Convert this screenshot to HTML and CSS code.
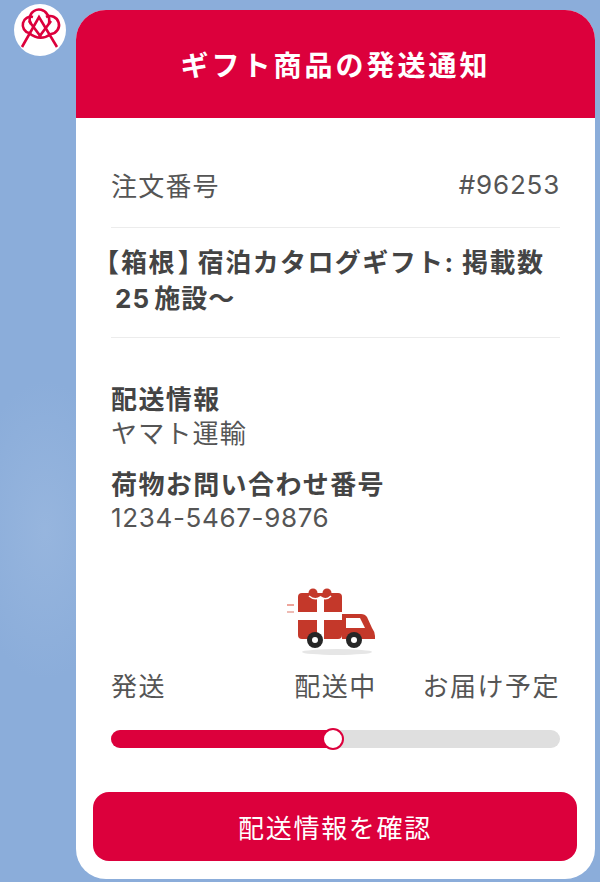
FILE: index.html
```html
<!DOCTYPE html>
<html lang="ja">
<head>
<meta charset="utf-8">
<title>ギフト商品の発送通知</title>
<link rel="stylesheet" href="styles.css">
</head>
<body>
<div class="chat">
  <div class="avatar">
    <svg viewBox="0 0 52 52" width="52" height="52" fill="none" stroke="#dc003c" stroke-width="2.600">
      <path d="M19 13 A8 8 0 1 0 15 29 Q26 38 37 30 A9 9 0 1 0 32 13"/>
      <path d="M17 20 A8 8 0 0 1 33 10 Q36 13 35 20"/>
      <path d="M8 43 L25 13 L43 43"/>
      <path d="M15 17 L27 33"/>
      <path d="M37 17 L25 33"/>
    </svg>
  </div>
  <main class="card">
    <header class="card-head">ギフト商品の発送通知</header>
    <div class="card-body">
      <div class="order-row"><span>注文番号</span><span class="order-no">#96253</span></div>
      <div class="product"><span class="bracket-open">【</span>箱根<span class="bracket-close">】</span>宿泊カタログギフト: 掲載数<br><span class="count">25 施設～</span></div>
      <section class="info">
        <h2 class="info-label">配送情報</h2>
        <p class="info-value">ヤマト運輸</p>
        <h2 class="info-label second">荷物お問い合わせ番号</h2>
        <p class="info-value num">1234-5467-9876</p>
      </section>
      <div class="truck-wrap">
        <svg class="truck" viewBox="0 0 92 70" width="92" height="70">
          <ellipse cx="52" cy="66" rx="35" ry="3" fill="#e6e6e6"/>
          <rect x="2" y="18" width="7" height="2" fill="#eea59b"/>
          <rect x="2" y="25" width="7" height="2" fill="#eebbb4"/>
          <path d="M57 28 H76 Q80 28 82 31 L87 42 Q90 46 90 50 V53 H57 Z" fill="#c4382a"/>
          <path d="M61 32 H75 L80 42 H61 Z" fill="#fff"/>
          <rect x="13" y="7" width="44" height="46" rx="4" fill="#c4382a"/>
          <rect x="13" y="26" width="44" height="8" fill="#fff"/>
          <rect x="32" y="12" width="7" height="41" fill="#fff"/>
          <circle cx="28" cy="7" r="4.500" fill="#c4382a"/>
          <circle cx="42" cy="7" r="4.500" fill="#c4382a"/>
          <path d="M24 10 Q30 15 35.500 11 Q41 15 46 10" fill="none" stroke="#fff" stroke-width="1.600"/>
          <circle cx="30" cy="54" r="8" fill="#262626"/>
          <circle cx="30" cy="54" r="3" fill="#fff"/>
          <circle cx="69" cy="54" r="8" fill="#262626"/>
          <circle cx="69" cy="54" r="3" fill="#fff"/>
        </svg>
      </div>
      <div class="steps"><span>発送</span><span class="mid">配送中</span><span class="end">お届け予定</span></div>
      <div class="track"><div class="fill"></div><div class="knob"></div></div>
      <a class="cta">配送情報を確認</a>
    </div>
  </main>
</div>
</body>
</html>
```
FILE: styles.css
```css
html, body { margin: 0; padding: 0; height: 100%; }
body {
  width: 600px; height: 882px; overflow: hidden;
  background:
    radial-gradient(ellipse 75px 150px at 45px 530px, rgba(160, 188, 225, 0.55), rgba(160, 188, 225, 0) 100%),
    #8badda;
  font-family: "Noto Sans CJK JP", "Noto Sans", sans-serif;
  color: #444;
}
.chat { display: flex; align-items: flex-start; padding: 4px 5px 0 14px; gap: 10px; }
.avatar {
  width: 52px; height: 52px; border-radius: 50%; background: #fff; flex: none;
  display: flex;
}
.card {
  margin-top: 6px; width: 519px; height: 869px; background: #fff;
  border-radius: 30px; overflow: hidden; display: flex; flex-direction: column;
}
.card-head {
  height: 108px; flex: none; background: #dc003c; color: #fff;
  display: flex; align-items: center; justify-content: center;
  font-size: 28px; font-weight: 700; letter-spacing: 3px;
}
.card-body { padding: 0 35px 18px; display: flex; flex-direction: column; flex: 1; }
.order-row {
  display: flex; justify-content: space-between; align-items: center;
  height: 110px; padding-top: 24px; border-bottom: 1px solid #ececec; box-sizing: border-box;
  font-size: 26px; letter-spacing: 1.2px; color: #555;
}
.order-no { font-family: "Inter", "Liberation Sans", sans-serif; letter-spacing: 0.8px; }
.product {
  height: 110px; box-sizing: border-box; border-bottom: 1px solid #ececec;
  padding-top: 17px;
  font-family: "Inter", "Noto Sans CJK JP", sans-serif;
  font-size: 26px; font-weight: 700; line-height: 36px; letter-spacing: 1.4px; color: #444;
}
.bracket-open, .bracket-close { font-feature-settings: "halt"; letter-spacing: 0; }
.bracket-open { margin-left: -5px; margin-right: 2px; }
.bracket-close { margin-left: 2px; margin-right: 7px; }
.count { margin-left: 4px; letter-spacing: 1px; word-spacing: -3px; }
.info { padding-top: 43px; }
.info-label { margin: 0; font-size: 26px; font-weight: 700; line-height: 34px; letter-spacing: 1.4px; color: #444; }
.info-value { margin: 0; font-size: 26px; line-height: 34px; letter-spacing: 1.200px; color: #555; }
.second { margin-top: 17px; }
.num { font-family: "Inter", "Liberation Sans", sans-serif; letter-spacing: 0.65px; margin-top: 1px; }
.truck-wrap { display: flex; justify-content: center; margin-top: 51px; height: 70px; padding-right: 9px; }
.steps {
  display: grid; grid-template-columns: 1fr auto 1fr;
  margin-top: 11px; font-size: 26px; line-height: 36px; letter-spacing: 1.5px; color: #555;
}
.end { justify-self: end; }
.track { height: 18px; border-radius: 9px; background: #dfdfdf; margin-top: 27px; position: relative; }
.fill { width: 50%; height: 100%; background: #dc003c; border-radius: 9px 0 0 9px; }
.knob {
  position: absolute; left: 211px; top: -2px; width: 18px; height: 18px;
  background: #fff; border: 2px solid #dc003c; border-radius: 50%;
}
.cta {
  margin: 44px -17px 0 -18px; height: 69px; border-radius: 16px; background: #dc003c; color: #fff;
  display: flex; align-items: center; justify-content: center;
  font-size: 26px; letter-spacing: 1.7px;
}
```
